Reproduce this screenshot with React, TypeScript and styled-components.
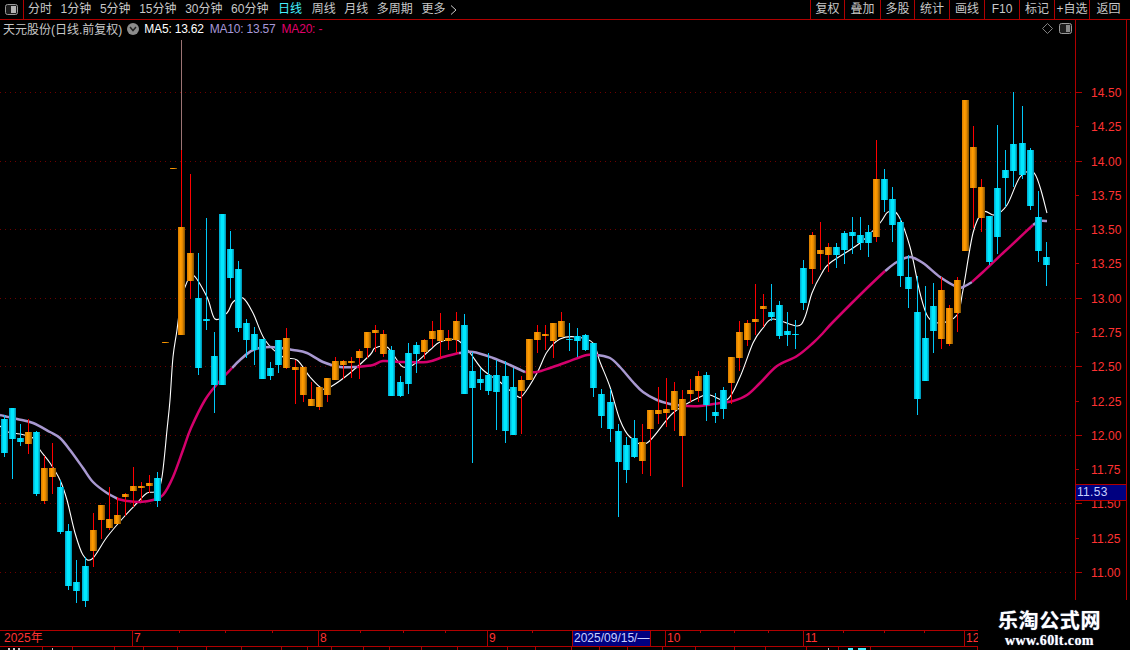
import React from "react";
import styled, { createGlobalStyle } from "styled-components";

const RED = "#b00000";
const LABEL = "#ff3232";
const CJK = `"Liberation Sans", "Noto Sans CJK SC", sans-serif`;

const Global = createGlobalStyle`
  html, body { margin: 0; padding: 0; background: #000; overflow: hidden; }
`;

const Page = styled.div`
  position: relative;
  width: 1130px;
  height: 650px;
  background: #000;
  overflow: hidden;
  font-family: ${CJK};
  font-size: 12px;
  color: #c8c8c8;
  display: flex;
  flex-direction: column;
`;

const Toolbar = styled.div`
  height: 19px;
  flex: none;
  display: flex;
  align-items: stretch;
  border-bottom: 1px solid ${RED};
`;
const IconBox = styled.div`
  width: 23px;
  flex: none;
  display: flex;
  align-items: center;
  justify-content: center;
  border-right: 1px solid ${RED};
  margin-right: 4px;
`;
const Tabs = styled.div`
  display: flex;
  align-items: center;
  gap: 8.6px;
`;
const Tab = styled.span<{ $active?: boolean }>`
  white-space: nowrap;
  line-height: 19px;
  color: ${(p) => (p.$active ? "#45f0ff" : "#c8c8c8")};
  margin: ${(p) => (p.$active ? "0 1px" : "0")};
`;
const MoreTab = styled(Tab)`
  display: flex;
  align-items: center;
  gap: 5px;
`;
const Actions = styled.div`
  margin-left: auto;
  display: flex;
  align-items: stretch;
`;
const Action = styled.div<{ $w: number; $pr?: number }>`
  width: ${(p) => p.$w}px;
  box-sizing: border-box;
  border-left: 1px solid ${RED};
  padding-right: ${(p) => p.$pr || 0}px;
  display: flex;
  align-items: center;
  justify-content: center;
  white-space: nowrap;
  line-height: 19px;
`;

const Main = styled.div`
  height: 610px;
  flex: none;
  display: flex;
`;
const ChartPane = styled.div`
  position: relative;
  width: 1075px;
  flex: none;
`;
const InfoBar = styled.div`
  position: absolute;
  left: 3px;
  right: 3px;
  top: 0;
  height: 17px;
  display: flex;
  align-items: center;
`;
const Title = styled.span`
  white-space: nowrap;
  margin-right: 5px;
`;
const Round = styled.span`
  width: 12px;
  height: 12px;
  border-radius: 50%;
  background: #8c8c8c;
  display: flex;
  align-items: center;
  justify-content: center;
  margin-right: 5px;
`;
const MaValue = styled.span<{ $c: string }>`
  color: ${(p) => p.$c};
  white-space: nowrap;
  margin-right: 6px;
  letter-spacing: -0.2px;
`;
const InfoIcons = styled.div`
  margin-left: auto;
  display: flex;
  align-items: center;
  gap: 6px;
`;
const Canvas = styled.svg`
  display: block;
`;
const AxisPane = styled.div`
  position: relative;
  width: 50px;
  flex: none;
  border-left: 1px solid ${RED};
  border-right: 1px solid ${RED};
`;
const PriceTag = styled.div`
  position: absolute;
  left: 0;
  right: 0;
  top: 464px;
  height: 15px;
  background: #000080;
  border-top: 1px solid ${RED};
  border-bottom: 1px solid ${RED};
  color: #c8d0ff;
  line-height: 15px;
  padding-left: 1px;
  letter-spacing: 0.3px;
`;

const TimeAxis = styled.div`
  width: 979px;
  height: 15px;
  flex: none;
  display: flex;
  border-top: 1px solid ${RED};
  border-bottom: 1px solid ${RED};
  overflow: hidden;
`;
const TimeCell = styled.div<{ $w: number; $first?: boolean }>`
  position: relative;
  width: ${(p) => p.$w}px;
  flex: none;
  box-sizing: border-box;
  border-left: ${(p) => (p.$first ? "none" : `1px solid ${RED}`)};
  padding-left: ${(p) => (p.$first ? 4 : 1)}px;
  color: ${LABEL};
  line-height: 15px;
  white-space: nowrap;
  overflow: hidden;
`;
const DateCell = styled(TimeCell)`
  background: #000080;
  color: #c8d0ff;
  border-right: 1px solid ${RED};
`;
const Tick = styled.i<{ $x: number }>`
  position: absolute;
  top: 0;
  left: ${(p) => p.$x}px;
  width: 1px;
  height: 2px;
  background: ${RED};
`;
const TabStrip = styled.div`
  height: 3px;
  flex: none;
  display: flex;
  overflow: hidden;
`;
const StripCell = styled.div<{ $w: number }>`
  width: ${(p) => p.$w}px;
  flex: none;
  box-sizing: border-box;
  border-right: 1px solid ${RED};
  display: flex;
  align-items: flex-start;
`;
const StripMark = styled.i<{ $l: number; $w: number; $c?: string }>`
  margin-left: ${(p) => p.$l}px;
  width: ${(p) => p.$w}px;
  height: 2px;
  margin-top: 1px;
  background: ${(p) => p.$c || "#c8c8c8"};
`;
const Watermark = styled.div`
  position: absolute;
  right: 0;
  bottom: 0;
  width: 152px;
  height: 50px;
  background: #000;
  display: flex;
  flex-direction: column;
  align-items: center;
  padding-top: 8px;
  box-sizing: border-box;
  padding-right: 9px;
  color: #fff;
  font-weight: 700;
`;
const MarkTitle = styled.div`
  font-size: 20px;
  line-height: 23px;
  letter-spacing: 0.6px;
  text-shadow: 0 0 1px #8fa8d8;
  font-family: "Noto Sans CJK SC", serif;
`;
const MarkUrl = styled.div`
  font-size: 14px;
  line-height: 14px;
  margin-top: 3px;
  letter-spacing: 0.4px;
  text-shadow: 0 0 1px #8fa8d8;
  font-family: "Liberation Serif", serif;
`;

type C = [number, number, number, number, number];
// type (0 cyan, 1 orange), high, body top, body bottom, low
const candles: C[] = [
  [0,415,419,453,457],[0,408,408,439,479],[0,424,438,442,446],[1,419,432,444,454],[0,431,432,494,496],
  [1,456,468,501,504],[1,443,468,477,494],[0,480,487,532,534],[0,524,531,586,590],[0,560,582,591,603],
  [0,557,566,601,607],[1,513,530,551,567],[1,505,505,520,539],[1,487,519,528,530],[1,497,515,524,524],
  [1,493,494,497,516],[1,467,486,491,507],[1,482,486,488,501],[1,475,483,486,493],[0,472,478,501,507],
  [1,342,342,343,343],[1,168,168,169,169],[1,40,227,335,335],[1,174,253,281,299],[0,253,298,368,375],
  [0,218,319,321,330],[0,332,356,385,413],[0,214,214,385,385],[0,231,249,278,298],[0,261,269,328,332],
  [0,319,323,340,358],[0,327,334,350,365],[0,339,339,379,379],[0,362,368,376,380],[0,340,340,365,373],
  [1,328,338,368,369],[1,360,367,370,404],[1,367,367,395,402],[1,382,399,406,406],[1,387,387,407,410],
  [1,378,378,395,402],[1,357,361,380,380],[1,360,361,365,379],[1,357,361,363,378],[1,349,351,358,379],
  [1,332,332,348,358],[1,325,330,333,352],[1,330,334,354,357],[0,346,350,396,396],[0,376,382,396,397],
  [0,343,353,384,394],[0,342,345,354,373],[1,339,340,352,359],[1,321,331,339,347],[1,313,330,341,358],
  [1,330,338,341,350],[1,312,321,340,353],[0,314,325,394,394],[0,352,371,388,463],[0,368,379,383,390],
  [0,353,375,391,395],[0,360,375,392,430],[0,361,376,431,443],[0,368,387,435,435],[1,376,380,391,434],
  [1,339,339,380,380],[1,325,332,340,353],[1,325,334,336,350],[1,323,323,341,358],[1,312,321,337,337],
  [0,323,339,340,351],[0,328,336,341,357],[0,334,335,350,351],[0,343,343,388,397],[0,389,394,416,428],
  [0,389,402,429,442],[0,424,431,462,517],[0,437,445,470,483],[0,420,438,457,458],[1,424,442,461,474],
  [1,410,410,429,476],[1,387,410,414,424],[1,378,409,413,427],[1,382,391,410,431],[1,390,399,436,487],
  [1,379,390,394,402],[1,371,376,391,402],[0,372,375,405,421],[0,393,412,416,423],[0,387,390,409,419],
  [1,357,357,383,404],[1,321,332,358,371],[1,320,323,340,346],[1,284,319,322,335],[1,294,306,309,327],
  [0,284,312,317,321],[0,301,305,336,339],[0,312,331,335,346],[0,320,334,335,349],[0,260,268,303,310],
  [1,232,235,269,284],[1,222,250,254,270],[1,243,247,255,272],[0,243,247,255,268],[0,231,233,250,264],
  [0,217,232,236,254],[0,217,235,243,250],[0,225,232,243,257],[1,140,179,237,242],[0,169,179,200,212],
  [0,187,199,225,242],[0,218,222,276,287],[0,255,277,289,308],[0,276,312,399,415],[0,286,338,381,381],
  [0,283,306,331,353],[1,277,290,339,349],[1,305,308,344,346],[1,277,280,313,332],[1,100,100,251,251],
  [1,126,147,188,228],[1,179,187,218,232],[0,216,216,262,265],[0,125,188,237,254],[0,150,170,178,207],
  [0,92,144,171,187],[0,106,143,175,179],[0,148,150,206,210],[0,191,217,251,262],[0,242,257,265,286],
];

const purple = [
  "0,415 4,416 17,419 33,423 50,432 60,438 70,450 83,468 93,482 107,493 118,499",
  "232,368 240,360 253,350 270,347 293,350 307,353 323,362 340,367 357,367",
  "459,353 473,352 493,358 510,365 525,372",
  "598,355 610,358 620,367 633,382 643,392 657,400 670,404 685,406",
  "885,271 897,262 910,257 923,263 940,277 957,287 963,287 972,282",
  "1033,225 1040,221 1047,221",
];
const pink = [
  "118,499 127,501 140,502 153,500 163,495 173,477 183,450 191,428 205,400 218,383 232,368",
  "357,367 373,365 383,361 403,362 427,362 443,357 459,353",
  "525,372 537,372 550,368 567,362 587,355 598,355",
  "685,406 700,406 720,403 733,401 747,395 760,383 777,366 797,356 813,343 823,333 833,322 863,292 885,271",
  "972,282 983,272 1003,253 1017,240 1033,225",
];
const white =
  "0,426 8,432 20,434 33,438 40,450 50,463 60,480 67,500 75,533 83,555 92,559 107,537 123,518 137,503 147,493 157,491 162,477 167,430 170,400 173,357 177,330 181,300 185,287 193,275 207,297 215,319 227,313 233,302 243,298 253,313 265,340 283,357 297,360 310,377 323,389 332,386 350,373 370,355 375,348 387,347 397,360 403,367 413,365 430,350 440,342 457,340 470,353 483,370 500,382 517,396 523,395 537,373 547,352 560,339 577,337 593,343 600,362 610,387 620,420 630,437 647,443 673,413 700,397 710,395 727,400 740,377 753,343 763,328 773,319 797,326 805,317 812,293 822,273 830,263 860,243 880,223 888,212 898,215 910,247 920,293 928,317 940,323 957,315 963,290 973,233 983,212 995,215 1007,205 1020,177 1033,172 1040,187 1047,213";

// Smooth a point list with a Catmull-Rom spline so the averages read as curves.
const smooth = (s: string) => {
  const p = s.split(" ").map((q) => q.split(",").map(Number));
  let d = `M${p[0][0]} ${p[0][1]}`;
  for (let i = 0; i < p.length - 1; i++) {
    const a = p[Math.max(i - 1, 0)];
    const b = p[i];
    const c = p[i + 1];
    const e = p[Math.min(i + 2, p.length - 1)];
    const c1x = b[0] + (c[0] - a[0]) / 6;
    const c1y = b[1] + (c[1] - a[1]) / 6;
    const c2x = c[0] - (e[0] - b[0]) / 6;
    const c2y = c[1] - (e[1] - b[1]) / 6;
    d += ` C${c1x.toFixed(1)} ${c1y.toFixed(1)} ${c2x.toFixed(1)} ${c2y.toFixed(1)} ${c[0]} ${c[1]}`;
  }
  return d;
};

const gridY = [0, 1, 2, 3, 4, 5, 6, 7].map((k) => Math.round(92 + 68.57 * k));
const labels = ["14.50","14.25","14.00","13.75","13.50","13.25","13.00","12.75","12.50","12.25","12.00","11.75","11.50","11.25","11.00"];

const PanelIcon = ({ right }: { right?: boolean }) => (
  <svg width="13" height="11" viewBox="0 0 13 11">
    <rect x="0.5" y="0.5" width="12" height="10" rx="2" fill="#1c1c1c" stroke="#9a9a9a" />
    <rect x={right ? 7 : 6} y="2" width={right ? 4 : 5} height="7" fill={right ? "#8a8a8a" : "#b4b4b4"} />
  </svg>
);

const Chart = () => (
  <Canvas width="1075" height="610" viewBox="0 20 1075 610">
    <defs>
      <linearGradient id="cy" x1="0" x2="1" y1="0" y2="0">
        <stop offset="0" stopColor="#00a4cc" />
        <stop offset="0.35" stopColor="#00e8ff" />
        <stop offset="0.65" stopColor="#00e8ff" />
        <stop offset="1" stopColor="#0088aa" />
      </linearGradient>
      <linearGradient id="or" x1="0" x2="1" y1="0" y2="0">
        <stop offset="0" stopColor="#d87c00" />
        <stop offset="0.35" stopColor="#ff9c00" />
        <stop offset="0.6" stopColor="#f09000" />
        <stop offset="1" stopColor="#805000" />
      </linearGradient>
    </defs>
    {gridY.map((y) => (
      <line key={y} x1="0" x2="1075" y1={y + 0.5} y2={y + 0.5} stroke="#6e0000" strokeDasharray="1 4" shapeRendering="crispEdges" />
    ))}
    <path d={smooth(white)} fill="none" stroke="#fff" strokeWidth="1.1" />
    {purple.map((p) => (
      <path key={p} d={smooth(p)} fill="none" stroke="#a898d0" strokeWidth="2.5" />
    ))}
    {pink.map((p) => (
      <path key={p} d={smooth(p)} fill="none" stroke="#d4006c" strokeWidth="2.5" />
    ))}
    {candles.map(([t, h, a, b, l], i) => {
      const cx = Math.floor(4.3 + 8.077 * i);
      const wick = t ? "#ff0000" : "#00c8f8";
      return (
        <g key={i} shapeRendering="crispEdges">
          {i === 22 ? (
            <>
              <rect x={cx} y={40} width="1" height={110} fill="#9c7474" />
              <rect x={cx} y={150} width="1" height={a - 150} fill={wick} />
            </>
          ) : (
            <rect x={cx} y={h} width="1" height={Math.max(l - h, 1)} fill={wick} />
          )}
          <rect x={cx - 3} y={a} width="7" height={Math.max(b - a, 1)} fill={t ? "url(#or)" : "url(#cy)"} />
        </g>
      );
    })}
  </Canvas>
);

const Axis = () => (
  <Canvas width="50" height="610" viewBox="1076 20 50 610">
    {labels.map((s, i) => {
      const y = Math.round(92 + 34.285 * i);
      return (
        <g key={s}>
          <rect x="1076" y={y} width={i % 2 ? 3 : 6} height="1" fill={RED} />
          <text x="1091" y={y + 5} fontSize="12" fontFamily="Liberation Sans" fill={LABEL} letterSpacing="0.1">
            {s}
          </text>
        </g>
      );
    })}
  </Canvas>
);

const actionCells: [string, number, number][] = [
  ["复权", 34, 0], ["叠加", 36, 0], ["多股", 34, 0], ["统计", 35, 0], ["画线", 35, 0],
  ["F10", 35, 0], ["标记", 35, 0], ["+自选", 35, 0], ["返回", 41, 3],
];
const strip = [43,30,42,29,34,29,35,40,26,24,32,26,32,36,50,28,36,28,28,35,33,39,31,41,32,32,107];

export default function App() {
  return (
    <Page>
      <Global />
      <Toolbar>
        <IconBox><PanelIcon /></IconBox>
        <Tabs>
          <Tab>分时</Tab>
          <Tab>1分钟</Tab>
          <Tab>5分钟</Tab>
          <Tab>15分钟</Tab>
          <Tab>30分钟</Tab>
          <Tab>60分钟</Tab>
          <Tab $active>日线</Tab>
          <Tab>周线</Tab>
          <Tab>月线</Tab>
          <Tab>多周期</Tab>
          <MoreTab>
            更多
            <svg width="7" height="10" viewBox="0 0 7 10">
              <path d="M1 0.5 L6 5 L1 9.5" fill="none" stroke="#c8c8c8" />
            </svg>
          </MoreTab>
        </Tabs>
        <Actions>
          {actionCells.map(([s, w, pr]) => (
            <Action key={s} $w={w} $pr={pr}>{s}</Action>
          ))}
        </Actions>
      </Toolbar>
      <Main>
        <ChartPane>
          <Chart />
          <InfoBar>
            <Title>天元股份(日线.前复权)</Title>
            <Round>
              <svg width="8" height="6" viewBox="0 0 8 6">
                <path d="M1 1 L4 4.5 L7 1" fill="none" stroke="#222" strokeWidth="1.5" />
              </svg>
            </Round>
            <MaValue $c="#ffffff">MA5: 13.62</MaValue>
            <MaValue $c="#a898d8">MA10: 13.57</MaValue>
            <MaValue $c="#e0006c">MA20: -</MaValue>
            <InfoIcons>
              <svg width="11" height="11" viewBox="0 0 11 11">
                <path d="M5.5 0.5 L10.5 5.5 L5.5 10.5 L0.5 5.5 Z" fill="none" stroke="#808080" />
              </svg>
              <PanelIcon right />
            </InfoIcons>
          </InfoBar>
        </ChartPane>
        <AxisPane>
          <Axis />
          <PriceTag>11.53</PriceTag>
        </AxisPane>
      </Main>
      <TimeAxis>
        <TimeCell $w={132} $first>2025年</TimeCell>
        <TimeCell $w={186}>7<Tick $x={46} /><Tick $x={92} /><Tick $x={139} /></TimeCell>
        <TimeCell $w={169}>8<Tick $x={41} /><Tick $x={84} /><Tick $x={126} /></TimeCell>
        <TimeCell $w={85}>9<Tick $x={44} /></TimeCell>
        <DateCell $w={79}>2025/09/15/—</DateCell>
        <TimeCell $w={14} $first />
        <TimeCell $w={138}>10<Tick $x={34} /><Tick $x={68} /><Tick $x={102} /></TimeCell>
        <TimeCell $w={161}>11<Tick $x={39} /><Tick $x={80} /><Tick $x={120} /></TimeCell>
        <TimeCell $w={15}>12</TimeCell>
      </TimeAxis>
      <TabStrip>
        {strip.map((w, i) => (
          <StripCell key={i} $w={w}>
            {i === 0 && <><StripMark $l={8} $w={2} /><StripMark $l={3} $w={2} /><StripMark $l={3} $w={2} /></>}
            {i === 1 && <StripMark $l={9} $w={1} />}
            {i === strip.length - 3 && <StripMark $l={21} $w={1} />}
            {i === strip.length - 2 && <><StripMark $l={9} $w={5} $c="#45f0ff" /><StripMark $l={5} $w={8} $c="#45f0ff" /></>}
          </StripCell>
        ))}
      </TabStrip>
      <Watermark>
        <MarkTitle>乐淘公式网</MarkTitle>
        <MarkUrl>www.60lt.com</MarkUrl>
      </Watermark>
    </Page>
  );
}
